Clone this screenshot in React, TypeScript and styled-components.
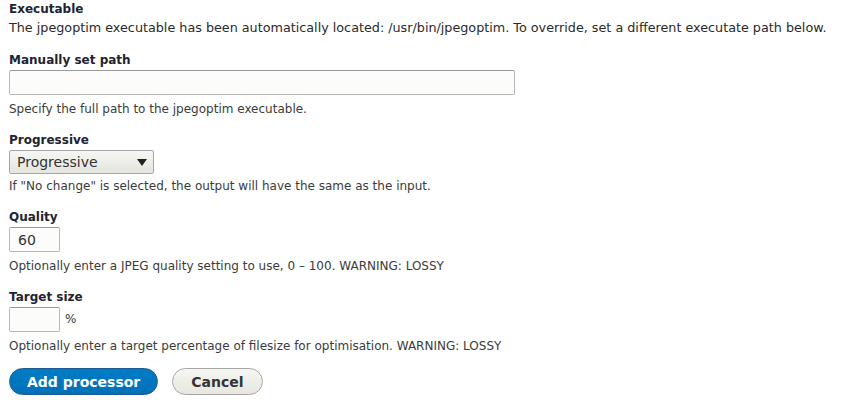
import styled, { createGlobalStyle } from 'styled-components';

const GlobalStyle = createGlobalStyle`
  body {
    margin: 0;
    background: #fff;
    font-family: 'DejaVu Sans', Verdana, sans-serif;
    color: #222330;
  }
`;

const Form = styled.form`
  padding: 0 9px;
  display: flex;
  flex-direction: column;
  gap: 13px;
`;

const Item = styled.div`
  display: flex;
  flex-direction: column;
  align-items: flex-start;
`;

const Label = styled.label`
  font-size: 12px;
  font-weight: bold;
  line-height: 18px;
`;

const Intro = styled.div`
  font-size: 12.75px;
  line-height: 20px;
  color: #2a2a2a;
`;

const Description = styled.div<{ $gap?: number }>`
  font-size: 12px;
  line-height: 18px;
  color: #3b3b3b;
  margin-top: ${(p) => p.$gap ?? 5}px;
`;

const TextInput = styled.input<{ $width: number }>`
  box-sizing: border-box;
  width: ${(p) => p.$width}px;
  height: 25px;
  margin: 1px 0 0;
  border: 1px solid #b8b8b8;
  border-top-color: #999;
  border-radius: 2px;
  background: #fcfcfa;
  padding: 0 8px;
  font-family: inherit;
  font-size: 14px;
  color: #333;
  outline: none;
`;

const InputRow = styled.div`
  display: flex;
  align-items: center;
  gap: 5px;
  font-size: 12px;
  color: #333;
`;

const Select = styled.div`
  box-sizing: border-box;
  width: 145px;
  height: 24px;
  margin-top: 1px;
  border: 1px solid #a6a6a6;
  border-radius: 2px;
  background: linear-gradient(#f6f6f3, #e5e5df);
  display: flex;
  align-items: center;
  justify-content: space-between;
  padding: 0 6px 0 7px;
  font-size: 14px;
  color: #333;
`;

const Arrow = styled.span`
  width: 0;
  height: 0;
  border-left: 5px solid transparent;
  border-right: 5px solid transparent;
  border-top: 7px solid #222;
`;

const Actions = styled.div`
  display: flex;
  gap: 14px;
`;

const Button = styled.button<{ $primary?: boolean }>`
  height: 27px;
  padding: 0 ${(p) => (p.$primary ? '17px' : '18px')};
  border-radius: 20em;
  font-family: inherit;
  font-size: 14px;
  font-weight: bold;
  border: 1px solid ${(p) => (p.$primary ? '#1e5c90' : '#a6a6a6')};
  background: ${(p) =>
    p.$primary
      ? 'linear-gradient(#007bc6, #0071b8)'
      : 'linear-gradient(#f6f6f3, #e7e7df)'};
  color: ${(p) => (p.$primary ? '#fff' : '#333')};
`;

export default function App() {
  return (
    <>
      <GlobalStyle />
      <Form>
        <Item>
          <Label>Executable</Label>
          <Intro>
            The jpegoptim executable has been automatically located: /usr/bin/jpegoptim. To
            override, set a different executate path below.
          </Intro>
        </Item>
        <Item>
          <Label>Manually set path</Label>
          <TextInput $width={506} />
          <Description>Specify the full path to the jpegoptim executable.</Description>
        </Item>
        <Item>
          <Label>Progressive</Label>
          <Select>
            Progressive
            <Arrow />
          </Select>
          <Description $gap={3}>
            If "No change" is selected, the output will have the same as the input.
          </Description>
        </Item>
        <Item>
          <Label>Quality</Label>
          <TextInput $width={51} defaultValue="60" />
          <Description>
            Optionally enter a JPEG quality setting to use, 0 – 100. WARNING: LOSSY
          </Description>
        </Item>
        <Item>
          <Label>Target size</Label>
          <InputRow>
            <TextInput $width={51} />
            %
          </InputRow>
          <Description>
            Optionally enter a target percentage of filesize for optimisation. WARNING: LOSSY
          </Description>
        </Item>
        <Actions>
          <Button $primary type="button">Add processor</Button>
          <Button type="button">Cancel</Button>
        </Actions>
      </Form>
    </>
  );
}
